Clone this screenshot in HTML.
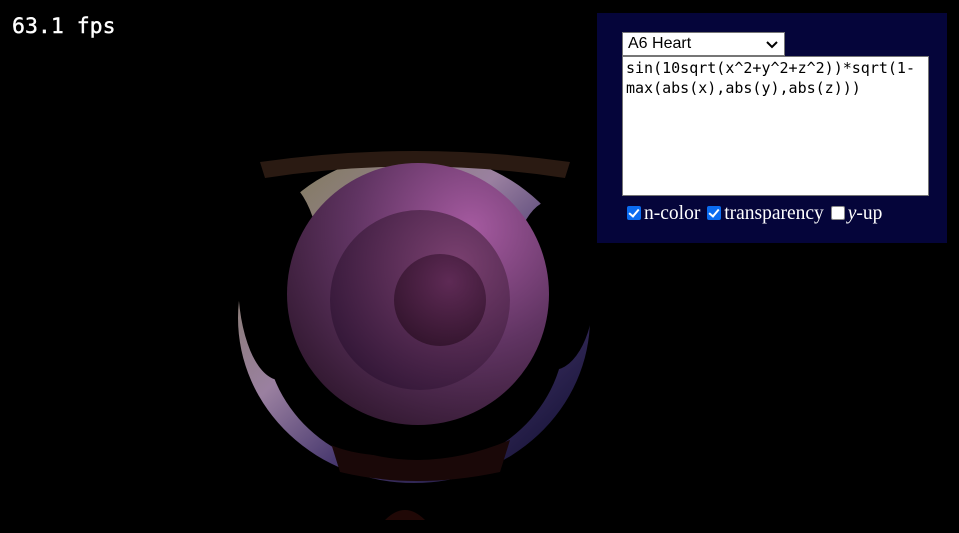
<!DOCTYPE html>
<html><head><style>
body{margin:0;width:959px;height:533px;background:#000;overflow:hidden;position:relative;font-family:"Liberation Sans",sans-serif}
#fps{position:absolute;left:12px;top:14px;color:#fff;font:21.5px "DejaVu Sans Mono",monospace;-webkit-text-stroke:0.4px #fff}
#panel{position:absolute;left:597px;top:13px;width:350px;height:230px;background:#05053a}
#sel{position:absolute;left:25px;top:19px;width:163px;height:24px;background:#fff;border:1px solid #767676;box-sizing:border-box;font-size:16px;line-height:22px;padding-left:5px;color:#000}
#sel svg{position:absolute;right:6px;top:8px}
#ta{position:absolute;left:25px;top:43px;width:307px;height:140px;background:#fff;border:1px solid #767676;box-sizing:border-box;font:15px "DejaVu Sans Mono",monospace;line-height:20px;padding:1px 3px;color:#000;white-space:nowrap}
.row{position:absolute;top:190px;left:30px;color:#fff;font:19.5px "Liberation Serif",serif;white-space:nowrap}
.cb{display:inline-block;width:14px;height:14px;border-radius:2px;vertical-align:-1px;margin-right:3px;position:relative;box-sizing:border-box}
.on{background:#0b6cf0}
.on:after{content:"";position:absolute;left:4px;top:1px;width:4px;height:8px;border:solid #fff;border-width:0 2px 2px 0;transform:rotate(40deg)}
.off{background:#fff;border:1px solid #888}
</style></head><body>
<svg width="959" height="533" style="position:absolute;left:0;top:0">
<defs>
<linearGradient id="ring" x1="0" y1="0" x2="1" y2="1">
<stop offset="0" stop-color="#7a7a48"/><stop offset="0.4" stop-color="#9a80a0"/><stop offset="0.6" stop-color="#4a3a70"/><stop offset="1" stop-color="#080828"/></linearGradient>
<radialGradient id="s1" cx="0.7" cy="0.25" r="0.9"><stop offset="0" stop-color="#a55aa0"/><stop offset="0.5" stop-color="#603462"/><stop offset="1" stop-color="#2a1428"/></radialGradient>
<radialGradient id="s2" cx="0.7" cy="0.3" r="0.9"><stop offset="0" stop-color="#7a4070"/><stop offset="1" stop-color="#2a1230"/></radialGradient>
<radialGradient id="s3" cx="0.6" cy="0.3" r="0.9"><stop offset="0" stop-color="#5e2a55"/><stop offset="1" stop-color="#2a1025"/></radialGradient>
</defs>
<ellipse cx="414" cy="318" rx="176" ry="165" fill="url(#ring)"/>
<path d="M260 162 Q415 140 570 162 L565 178 Q415 155 265 178Z" fill="#2a1a12"/>
<ellipse cx="415" cy="330" rx="150" ry="140" fill="#000"/>
<ellipse cx="280" cy="280" rx="42" ry="100" fill="#000"/>
<ellipse cx="553" cy="285" rx="42" ry="85" fill="#000"/>
<path d="M330 440 Q415 480 510 440 L500 472 Q415 490 340 472Z" fill="#1a0808"/>
<ellipse cx="395" cy="430" rx="78" ry="26" fill="#000"/>
<circle cx="418" cy="294" r="131" fill="url(#s1)"/>
<circle cx="420" cy="300" r="90" fill="url(#s2)"/>
<circle cx="440" cy="300" r="46" fill="url(#s3)"/>
<path d="M385 520 Q405 500 425 520Z" fill="#200806"/>
</svg>
<div id="fps">63.1 fps</div>
<div id="panel">
<div id="sel">A6 Heart<svg width="12" height="8"><path d="M1 1l5 5 5-5" stroke="#000" stroke-width="2" fill="none"/></svg></div>
<div id="ta">sin(10sqrt(x^2+y^2+z^2))*sqrt(1-<br>max(abs(x),abs(y),abs(z)))</div>
<div class="row"><span class="cb on"></span>n-color <span class="cb on" style="margin-left:2px"></span>transparency <span class="cb off" style="margin-left:2px"></span><i>y</i>-up</div>
</div>
</body></html>
